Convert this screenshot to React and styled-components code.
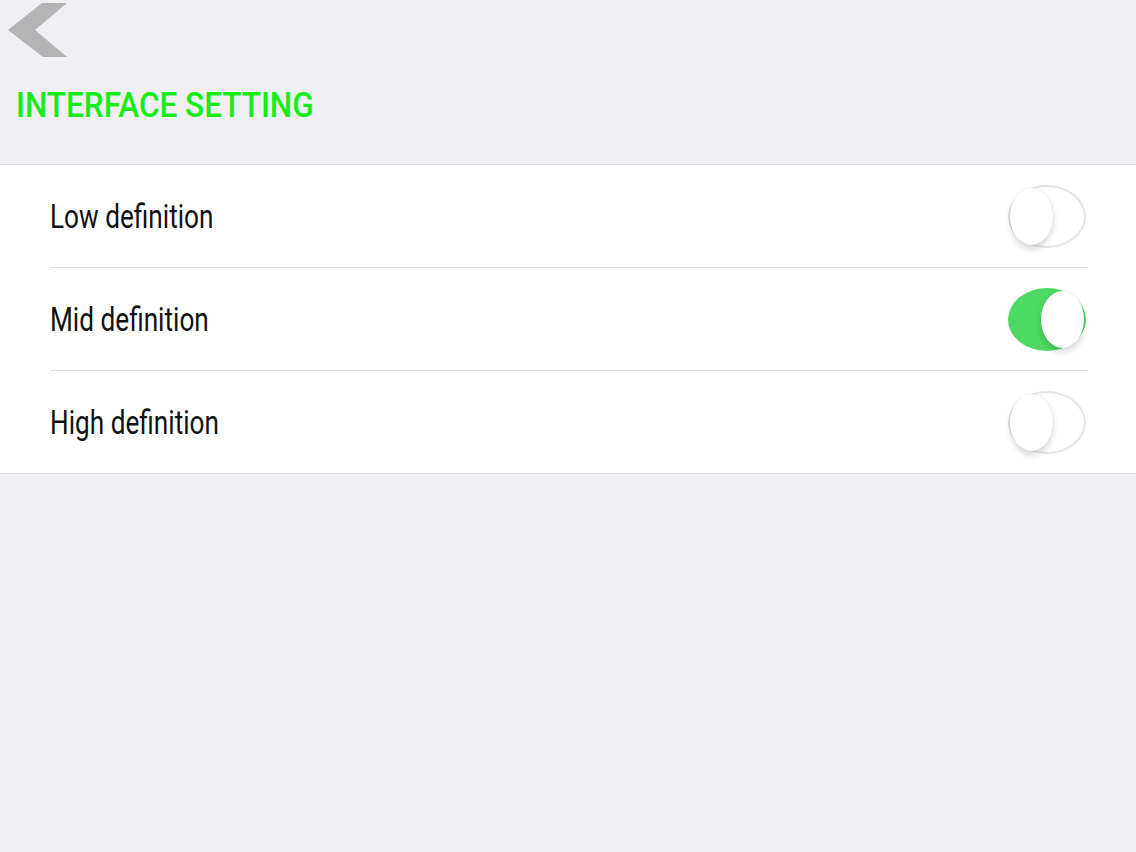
import React, { useState } from "react";
import styled, { createGlobalStyle } from "styled-components";

const Global = createGlobalStyle`
  html, body { margin: 0; padding: 0; background: #efeff4; }
  body { font-family: Roboto, "Liberation Sans", sans-serif; }
  #root { min-height: 852px; background: #efeff4; }
`;

const Page = styled.div`
  width: 1136px;
  min-height: 852px;
  background: #efeff4;
`;

const Header = styled.header`
  height: 164px;
  border-bottom: 1px solid #dcdadf;
  display: flex;
  flex-direction: column;
`;

const BackButton = styled.button`
  all: unset;
  cursor: pointer;
  display: block;
  width: 72px;
  height: 60px;
`;

const Title = styled.h1`
  margin: 28px 0 0 16px;
  font-family: Roboto, "Liberation Sans", sans-serif;
  font-weight: 500;
  font-size: 35px;
  line-height: 36px;
  color: #14ee14;
  letter-spacing: 0;
  display: inline-block;
  transform: scaleX(0.9);
  transform-origin: left center;
  white-space: nowrap;
`;

const List = styled.ul`
  list-style: none;
  margin: 0;
  padding: 0;
  background: #ffffff;
  border-bottom: 1px solid #dcdadf;
`;

const Row = styled.li`
  margin: 0 49px 0 50px;
  height: 102px;
  display: flex;
  align-items: center;
  justify-content: space-between;
  border-bottom: ${(p) => (p.$last ? "none" : "1px solid #e0dfe3")};
`;

const Label = styled.span`
  font-family: Roboto, "Liberation Sans", sans-serif;
  font-size: 34px;
  color: #111;
  display: inline-block;
  transform: scaleX(0.77);
  transform-origin: left center;
  white-space: nowrap;
`;

const Track = styled.button`
  all: unset;
  cursor: pointer;
  box-sizing: border-box;
  position: relative;
  width: 78px;
  height: 63px;
  margin-right: 1px;
  border-radius: 39px / 31.5px;
  background: ${(p) => (p.$on ? "#4cd964" : "#ffffff")};
  border: 2px solid ${(p) => (p.$on ? "#4cd964" : "#e3e3e8")};
`;

const Knob = styled.span`
  position: absolute;
  top: 1px;
  left: ${(p) => (p.$on ? "31px" : "0px")};
  width: 43px;
  height: 57px;
  border-radius: 50%;
  background: #fff;
  box-shadow: 0 4px 6px rgba(0, 0, 0, 0.16), 0 0 0 0.5px rgba(0, 0, 0, 0.08);
`;

function BackIcon() {
  return (
    <svg width="72" height="60" viewBox="0 0 72 60">
      <polygon points="42,3 67,3 35,30 67,57 43,57 8,30" fill="#b4b4b4" />
    </svg>
  );
}

function Toggle({ on, onClick }) {
  return (
    <Track $on={on} onClick={onClick} aria-pressed={on}>
      <Knob $on={on} />
    </Track>
  );
}

const options = ["Low definition", "Mid definition", "High definition"];

export default function App() {
  const [selected, setSelected] = useState(1);
  return (
    <Page>
      <Global />
      <Header>
        <BackButton aria-label="Back">
          <BackIcon />
        </BackButton>
        <div>
          <Title>INTERFACE SETTING</Title>
        </div>
      </Header>
      <List>
        {options.map((o, i) => (
          <Row key={o} $last={i === options.length - 1}>
            <Label>{o}</Label>
            <Toggle on={selected === i} onClick={() => setSelected(i)} />
          </Row>
        ))}
      </List>
    </Page>
  );
}
